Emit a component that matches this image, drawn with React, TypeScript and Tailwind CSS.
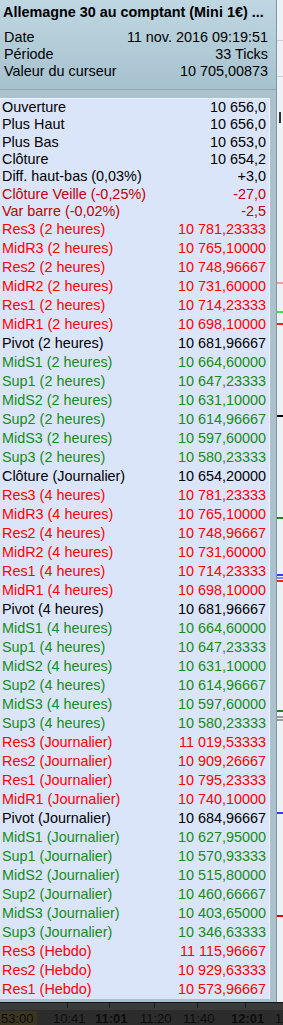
import React from 'react';

type Tone = 'k' | 'd' | 'r' | 'g';

const toneClass: Record<Tone, string> = {
    k: 'text-black',
    d: 'text-[#c00000]',
    r: 'text-[#ff0000]',
    g: 'text-[#168c16]',
};

const summary: [string, string, Tone][] = [
    ['Ouverture', '10 656,0', 'k'],
    ['Plus Haut', '10 656,0', 'k'],
    ['Plus Bas', '10 653,0', 'k'],
    ['Clôture', '10 654,2', 'k'],
    ['Diff. haut-bas (0,03%)', '+3,0', 'k'],
    ['Clôture Veille (-0,25%)', '-27,0', 'd'],
    ['Var barre (-0,02%)', '-2,5', 'd'],
];

const hourly: [string, string, Tone][] = [
    ['Res3', '10 781,23333', 'r'],
    ['MidR3', '10 765,10000', 'r'],
    ['Res2', '10 748,96667', 'r'],
    ['MidR2', '10 731,60000', 'r'],
    ['Res1', '10 714,23333', 'r'],
    ['MidR1', '10 698,10000', 'r'],
    ['Pivot', '10 681,96667', 'k'],
    ['MidS1', '10 664,60000', 'g'],
    ['Sup1', '10 647,23333', 'g'],
    ['MidS2', '10 631,10000', 'g'],
    ['Sup2', '10 614,96667', 'g'],
    ['MidS3', '10 597,60000', 'g'],
    ['Sup3', '10 580,23333', 'g'],
];

const daily: [string, string, Tone][] = [
    ['Res3', '11 019,53333', 'r'],
    ['Res2', '10 909,26667', 'r'],
    ['Res1', '10 795,23333', 'r'],
    ['MidR1', '10 740,10000', 'r'],
    ['Pivot', '10 684,96667', 'k'],
    ['MidS1', '10 627,95000', 'g'],
    ['Sup1', '10 570,93333', 'g'],
    ['MidS2', '10 515,80000', 'g'],
    ['Sup2', '10 460,66667', 'g'],
    ['MidS3', '10 403,65000', 'g'],
    ['Sup3', '10 346,63333', 'g'],
];

const weekly: [string, string, Tone][] = [
    ['Res3', '11 115,96667', 'r'],
    ['Res2', '10 929,63333', 'r'],
    ['Res1', '10 573,96667', 'r'],
];

const levels: [string, string, Tone][] = [
    ...hourly.map(([n, v, t]) => [`${n} (2 heures)`, v, t] as [string, string, Tone]),
    ['Clôture (Journalier)', '10 654,20000', 'k'],
    ...hourly.map(([n, v, t]) => [`${n} (4 heures)`, v, t] as [string, string, Tone]),
    ...daily.map(([n, v, t]) => [`${n} (Journalier)`, v, t] as [string, string, Tone]),
    ...weekly.map(([n, v, t]) => [`${n} (Hebdo)`, v, t] as [string, string, Tone]),
];

// little horizontal strokes of the chart peeking out on the right
const marks = [
    { top: 282, color: '#ff9a9a' },
    { top: 311, color: '#3fe03f' },
    { top: 323, color: '#ff2020' },
    { top: 415, color: '#000000' },
    { top: 517, color: '#1a8a1a' },
    { top: 574, color: '#3b3bff' },
    { top: 577, color: '#8a8aff' },
    { top: 580, color: '#ff2020' },
    { top: 710, color: '#1a8a1a' },
    { top: 716, color: '#9a9a9a' },
    { top: 719, color: '#9a9a9a' },
    { top: 812, color: '#3b3bff' },
    { top: 915, color: '#e00000' },
];

const ticks = [
    { left: 0, label: '53:00', bold: false, boxed: true },
    { left: 53, label: '10:41', bold: false, boxed: false },
    { left: 95, label: '11:01', bold: true, boxed: false },
    { left: 140, label: '11:20', bold: false, boxed: false },
    { left: 183, label: '11:40', bold: false, boxed: false },
    { left: 231, label: '12:01', bold: true, boxed: false },
    { left: 275, label: '1', bold: false, boxed: false },
];

function Row({ label, value, tone, tall }: { label: string; value: string; tone: Tone; tall?: boolean }) {
    return (
        <div
            className={`flex items-center justify-between pl-[2px] pr-[3px] ${tall ? 'h-[19px]' : 'h-[17.33px]'} ${toneClass[tone]}`}
        >
            <span>{label}</span>
            <span>{value}</span>
        </div>
    );
}

export default function App() {
    return (
        <div className="w-[283px] h-[1025px] flex flex-col overflow-hidden bg-[#2a2a2a] font-['Liberation_Sans',Arial,sans-serif] text-[14.4px]">
            <div className="flex h-[1002px]">
                <div className="w-[276px] flex flex-col bg-[#a7bfcb]">
                    <div className="h-[90px] shrink-0 bg-linear-to-b from-[#bfd7e2] to-[#a6c2ce] border-b border-[#8ea8b5] pl-[3px] pr-[8px] pt-[4px]">
                        <div className="font-bold leading-[17px] whitespace-nowrap">
                            Allemagne 30 au comptant (Mini 1€) ...
                        </div>
                        <div className="mt-[8px] pl-px leading-[17px]">
                            <div className="flex justify-between">
                                <span>Date</span>
                                <span>11 nov. 2016 09:19:51</span>
                            </div>
                            <div className="flex justify-between">
                                <span>Période</span>
                                <span>33 Ticks</span>
                            </div>
                            <div className="flex justify-between">
                                <span>Valeur du curseur</span>
                                <span>10 705,00873</span>
                            </div>
                        </div>
                    </div>
                    <div className="flex-1 pt-[8px] pr-[6px] pb-[3px] bg-[#abc2cd]">
                        <div className="h-full bg-[#dbe5fa] border-t border-r border-[#eef2fb] rounded-tr-[2px]">
                            {summary.map(([l, v, t], i) => (
                                <Row key={`s${i}`} label={l} value={v} tone={t} />
                            ))}
                            {levels.map(([l, v, t], i) => (
                                <Row key={`l${i}`} label={l} value={v} tone={t} tall />
                            ))}
                        </div>
                    </div>
                </div>
                <div className="w-px bg-[#7f98a5]" />
                <div className="relative flex-1 bg-[#eef1f6]">
                    <div className="absolute left-0 right-0 top-[40px] h-px bg-[#c8d0d8]" />
                    <div className="absolute left-0 right-0 top-[76px] h-px bg-[#c8d0d8]" />
                    <div className="absolute left-[1px] top-[112px] w-[3px] h-[11px] border-r-2 border-[#333]" />
                    {marks.map((m, i) => (
                        <div
                            key={i}
                            className="absolute left-0 right-0 h-[2px]"
                            style={{ top: m.top, backgroundColor: m.color }}
                        />
                    ))}
                </div>
            </div>
            <div className="h-px bg-[#161616]" />
            <div className="relative h-[7px] bg-[#3a3a3a]">
                {ticks.slice(1).map((t) => (
                    <div
                        key={t.label}
                        className="absolute top-0 h-[5px] w-px bg-[#1e1e1e]"
                        style={{ left: t.left + 14 }}
                    />
                ))}
            </div>
            <div className="relative flex-1 bg-[#2c2c2c] text-[13px] leading-[16px] text-[#0c0c0c]">
                {ticks.map((t) => (
                    <span
                        key={t.label}
                        className={`absolute top-[1px] ${t.bold ? 'font-bold' : ''} ${t.boxed ? 'bg-[#3a3621] pr-[3px] pl-px' : ''}`}
                        style={{ left: t.left }}
                    >
                        {t.label}
                    </span>
                ))}
            </div>
        </div>
    );
}
